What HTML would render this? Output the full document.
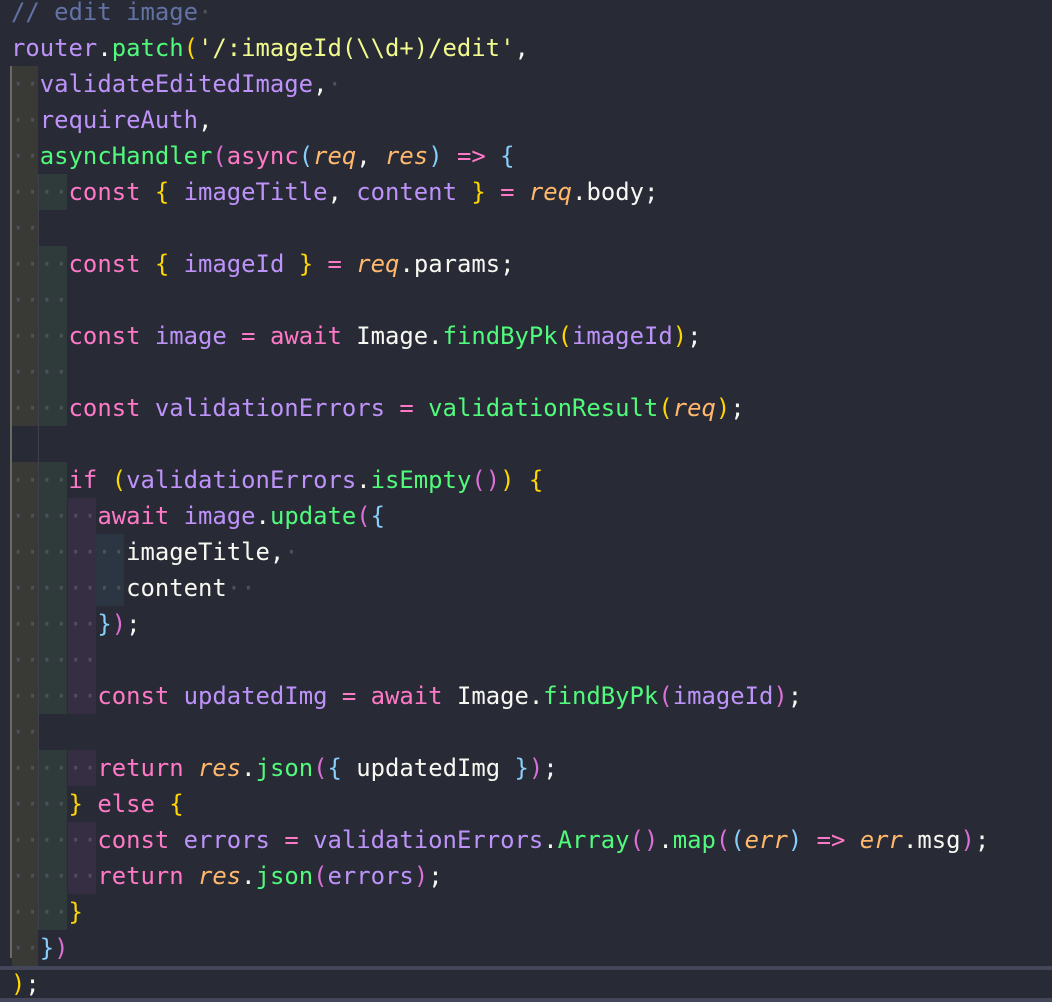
<!DOCTYPE html>
<html><head><meta charset="utf-8"><style>
html,body{margin:0;padding:0;width:1052px;height:1002px;overflow:hidden;background:#282a36;}
.l{position:absolute;left:0;width:1052px;height:36px;}
.g{position:absolute;top:0;height:36px;}
.g1{left:12px;width:26px;background:#393a35;}
.g2{left:39px;width:28px;background:#2f3a3b;}
.g3{left:68px;width:28px;background:#362f43;}
.g4{left:96px;width:28px;background:#2c3542;}
.t{position:absolute;left:11px;top:0;line-height:36px;font-family:"DejaVu Sans Mono","Liberation Mono",monospace;font-size:23.9px;color:#f8f8f2;white-space:pre;}
.d{color:#4e505c}
.c{color:#6272a4}.p{color:#ff79c6}.v{color:#bd93f9}.f{color:#50fa7b}.s{color:#f1fa8c}
.o{color:#ffb86c;font-style:italic}
.y{color:#ffd700}.m{color:#da70d6}.b{color:#87cefa}
#bar{position:absolute;left:10px;top:66px;width:2px;height:892px;background:#6a6c63;}
#bar2{position:absolute;left:38px;top:174px;width:1px;height:756px;background:#3d404a;}
#cur{position:absolute;left:0;top:966px;width:1052px;height:28px;border-top:4px solid #44475a;border-bottom:4px solid #44475a;}
</style></head><body>
<div id="cur"></div>
<div id="bar"></div>
<div id="bar2"></div>

<div class="l" style="top:-6px"><span class="t"><span class="c">// edit image</span><span class="d">·</span></span></div>
<div class="l" style="top:30px"><span class="t"><span class="v">router</span>.<span class="f">patch</span><span class="y">(</span><span class="s">'/:imageId(\\d+)/edit'</span>,</span></div>
<div class="l" style="top:66px"><span class="g g1"></span><span class="t"><span class="d">··</span><span class="v">validateEditedImage</span>,<span class="d">·</span></span></div>
<div class="l" style="top:102px"><span class="g g1"></span><span class="t"><span class="d">··</span><span class="v">requireAuth</span>,</span></div>
<div class="l" style="top:138px"><span class="g g1"></span><span class="t"><span class="d">··</span><span class="f">asyncHandler</span><span class="m">(</span><span class="p">async</span><span class="b">(</span><span class="o">req</span>, <span class="o">res</span><span class="b">)</span> <span class="p">=&gt;</span> <span class="b">{</span></span></div>
<div class="l" style="top:174px"><span class="g g1"></span><span class="g g2"></span><span class="t"><span class="d">····</span><span class="p">const</span> <span class="y">{</span> <span class="v">imageTitle</span>, <span class="v">content</span> <span class="y">}</span> <span class="p">=</span> <span class="o">req</span>.body;</span></div>
<div class="l" style="top:210px"><span class="g g1"></span><span class="t"><span class="d">··</span></span></div>
<div class="l" style="top:246px"><span class="g g1"></span><span class="g g2"></span><span class="t"><span class="d">····</span><span class="p">const</span> <span class="y">{</span> <span class="v">imageId</span> <span class="y">}</span> <span class="p">=</span> <span class="o">req</span>.params;</span></div>
<div class="l" style="top:282px"><span class="g g1"></span><span class="g g2"></span><span class="t"><span class="d">····</span></span></div>
<div class="l" style="top:318px"><span class="g g1"></span><span class="g g2"></span><span class="t"><span class="d">····</span><span class="p">const</span> <span class="v">image</span> <span class="p">=</span> <span class="p">await</span> Image.<span class="f">findByPk</span><span class="y">(</span><span class="v">imageId</span><span class="y">)</span>;</span></div>
<div class="l" style="top:354px"><span class="g g1"></span><span class="g g2"></span><span class="t"><span class="d">····</span></span></div>
<div class="l" style="top:390px"><span class="g g1"></span><span class="g g2"></span><span class="t"><span class="d">····</span><span class="p">const</span> <span class="v">validationErrors</span> <span class="p">=</span> <span class="f">validationResult</span><span class="y">(</span><span class="o">req</span><span class="y">)</span>;</span></div>
<div class="l" style="top:426px"></div>
<div class="l" style="top:462px"><span class="g g1"></span><span class="g g2"></span><span class="t"><span class="d">····</span><span class="p">if</span> <span class="y">(</span><span class="v">validationErrors</span>.<span class="f">isEmpty</span><span class="m">()</span><span class="y">)</span> <span class="y">{</span></span></div>
<div class="l" style="top:498px"><span class="g g1"></span><span class="g g2"></span><span class="g g3"></span><span class="t"><span class="d">······</span><span class="p">await</span> <span class="v">image</span>.<span class="f">update</span><span class="m">(</span><span class="b">{</span></span></div>
<div class="l" style="top:534px"><span class="g g1"></span><span class="g g2"></span><span class="g g3"></span><span class="g g4"></span><span class="t"><span class="d">········</span>imageTitle,<span class="d">·</span></span></div>
<div class="l" style="top:570px"><span class="g g1"></span><span class="g g2"></span><span class="g g3"></span><span class="g g4"></span><span class="t"><span class="d">········</span>content<span class="d">··</span></span></div>
<div class="l" style="top:606px"><span class="g g1"></span><span class="g g2"></span><span class="g g3"></span><span class="t"><span class="d">······</span><span class="b">}</span><span class="m">)</span>;</span></div>
<div class="l" style="top:642px"><span class="g g1"></span><span class="g g2"></span><span class="g g3"></span><span class="t"><span class="d">······</span></span></div>
<div class="l" style="top:678px"><span class="g g1"></span><span class="g g2"></span><span class="g g3"></span><span class="t"><span class="d">······</span><span class="p">const</span> <span class="v">updatedImg</span> <span class="p">=</span> <span class="p">await</span> Image.<span class="f">findByPk</span><span class="m">(</span><span class="v">imageId</span><span class="m">)</span>;</span></div>
<div class="l" style="top:714px"><span class="g g1"></span><span class="t"><span class="d">··</span></span></div>
<div class="l" style="top:750px"><span class="g g1"></span><span class="g g2"></span><span class="g g3"></span><span class="t"><span class="d">······</span><span class="p">return</span> <span class="o">res</span>.<span class="f">json</span><span class="m">(</span><span class="b">{</span> updatedImg <span class="b">}</span><span class="m">)</span>;</span></div>
<div class="l" style="top:786px"><span class="g g1"></span><span class="g g2"></span><span class="t"><span class="d">····</span><span class="y">}</span> <span class="p">else</span> <span class="y">{</span></span></div>
<div class="l" style="top:822px"><span class="g g1"></span><span class="g g2"></span><span class="g g3"></span><span class="t"><span class="d">······</span><span class="p">const</span> <span class="v">errors</span> <span class="p">=</span> <span class="v">validationErrors</span>.<span class="f">Array</span><span class="m">()</span>.<span class="f">map</span><span class="m">(</span><span class="b">(</span><span class="o">err</span><span class="b">)</span> <span class="p">=&gt;</span> <span class="o">err</span>.msg<span class="m">)</span>;</span></div>
<div class="l" style="top:858px"><span class="g g1"></span><span class="g g2"></span><span class="g g3"></span><span class="t"><span class="d">······</span><span class="p">return</span> <span class="o">res</span>.<span class="f">json</span><span class="m">(</span><span class="v">errors</span><span class="m">)</span>;</span></div>
<div class="l" style="top:894px"><span class="g g1"></span><span class="g g2"></span><span class="t"><span class="d">····</span><span class="y">}</span></span></div>
<div class="l" style="top:930px"><span class="g g1"></span><span class="t"><span class="d">··</span><span class="b">}</span><span class="m">)</span></span></div>
<div class="l" style="top:966px"><span class="t"><span class="y">)</span>;</span></div>
</body></html>
